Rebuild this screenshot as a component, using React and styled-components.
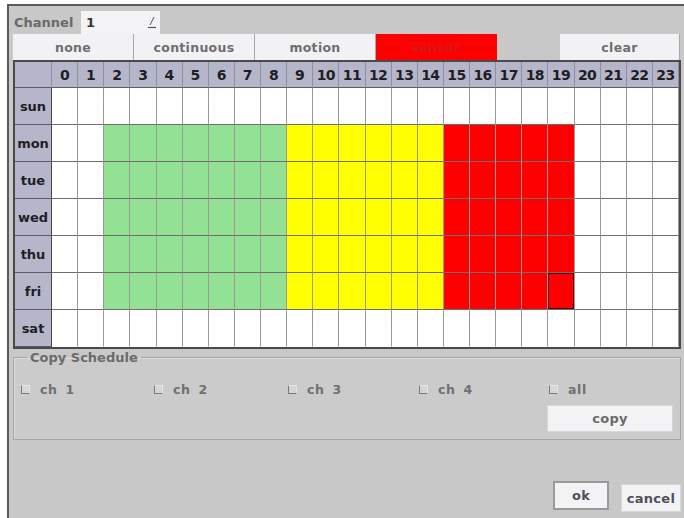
import React from 'react';
import styled, { createGlobalStyle } from 'styled-components';

const Global = createGlobalStyle`
    html, body {
        margin: 0;
        padding: 0;
        background: #ffffff;
    }
    body {
        font-family: 'DejaVu Sans', Verdana, sans-serif;
    }
`;

const Window = styled.div`
    margin: 4px 0 0 7px;
    width: 677px;
    height: 514px;
    box-sizing: border-box;
    border-left: 2px solid #5a5a5a;
    border-top: 2px solid #5a5a5a;
    background: #c8c8c8;
    padding: 4px 3px 0 4px;
    display: flex;
    flex-direction: column;
`;

const ChannelRow = styled.div`
    display: flex;
    align-items: center;
    height: 24px;
`;

const Label = styled.span`
    font-size: 13px;
    font-weight: bold;
    color: #6a6a6a;
    width: 67px;
    padding-left: 1px;
`;

const ChannelInput = styled.div`
    width: 79px;
    height: 23px;
    box-sizing: border-box;
    background: #f3f3f5;
    display: flex;
    align-items: center;
    justify-content: space-between;
    padding: 0 4px 0 5px;
    font-size: 13px;
    font-weight: bold;
    color: #333;
`;

const ModeRow = styled.div`
    display: flex;
    height: 26px;
`;

const ModeButton = styled.div`
    width: ${p => p.$w || 121}px;
    height: 26px;
    box-sizing: border-box;
    margin-left: ${p => p.$gap || 0}px;
    background: ${p => (p.$active ? '#ff0000' : '#f2f2f4')};
    border-right: 1px solid ${p => (p.$active ? '#ff0000' : '#a8a8a8')};
    display: flex;
    align-items: center;
    justify-content: center;
    font-size: 12.5px;
    font-weight: bold;
    letter-spacing: 0.3px;
    color: ${p => (p.$active ? '#d81818' : '#6e6e6e')};
`;

const Grid = styled.div`
    width: 668px;
    box-sizing: border-box;
    border: 2px solid #4a4a4a;
    display: grid;
    grid-template-columns: 37px repeat(24, 1fr);
    grid-template-rows: 26px repeat(7, 37px);
    background: #ffffff;
`;

const HeadCell = styled.div`
    background: ${p => (p.$light ? '#c3c3d3' : '#b6b6ca')};
    border-right: 1px solid #8e8e9e;
    border-bottom: 1px solid #5a5a66;
    display: flex;
    align-items: center;
    justify-content: center;
    font-size: 14px;
    font-weight: bold;
    letter-spacing: -0.6px;
    color: #1e1e24;
`;

const DayCell = styled(HeadCell)`
    font-size: 13px;
    letter-spacing: 0;
    border-right: 1px solid #4a4a4a;
`;

const Cell = styled.div`
    background: ${p => p.$color};
    border-right: 1px solid #9a9a9a;
    border-bottom: 1px solid ${p => (p.$last ? 'transparent' : '#6e6e6e')};
    box-shadow: ${p => (p.$selected ? 'inset 0 0 0 1px #5a0000' : 'none')};
`;

const CopyBox = styled.fieldset`
    margin: 1px 0 0;
    width: 668px;
    height: 90px;
    box-sizing: border-box;
    padding: 17px 0 0 7px;
    border: 1px solid #a6a6a6;
    box-shadow: inset 1px 1px 0 #dcdcdc;
    background: #cbcbcb;
`;

const Legend = styled.legend`
    font-size: 13px;
    font-weight: bold;
    color: #6a6a6a;
    padding: 0 3px;
    margin-left: 6px;
`;

const CheckRow = styled.div`
    display: flex;
`;

const CheckItem = styled.label`
    width: ${p => p.$w}px;
    display: flex;
    align-items: center;
    gap: 10px;
    font-size: 12.5px;
    font-weight: bold;
    letter-spacing: 0.6px;
    word-spacing: 3px;
    color: #707070;
`;

const Box = styled.span`
    width: 7px;
    height: 7px;
    background: #d6d6d6;
    border-left: 1px solid #7a7a7a;
    border-bottom: 1px solid #7a7a7a;
    border-top: 1px solid #e6e6e6;
    border-right: 1px solid #e6e6e6;
`;

const FieldBottom = styled.div`
    display: flex;
    justify-content: flex-end;
    padding: 8px 7px 0 0;
`;

const PlainButton = styled.div`
    width: ${p => p.$w}px;
    height: ${p => p.$h}px;
    margin-top: ${p => p.$top || 0}px;
    box-sizing: border-box;
    background: #f3f3f5;
    border: ${p => (p.$focus ? '2px solid #9a9a9a' : '1px solid #d8d8d8')};
    display: flex;
    align-items: center;
    justify-content: center;
    font-size: 13px;
    font-weight: bold;
    color: ${p => (p.$dark ? '#505058' : '#6a6a6a')};
    letter-spacing: 0.3px;
`;

const Footer = styled.div`
    display: flex;
    justify-content: flex-end;
    align-items: flex-start;
    gap: 12px;
    margin-top: 41px;
`;

const hours = Array.from({ length: 24 }, (_, i) => i);
const days = ['sun', 'mon', 'tue', 'wed', 'thu', 'fri', 'sat'];

const colorFor = (d, h) => {
    if (d < 1 || d > 5) return '#ffffff';
    if (h >= 2 && h <= 8) return '#93e293';
    if (h >= 9 && h <= 14) return '#ffff00';
    if (h >= 15 && h <= 19) return '#ff0000';
    return '#ffffff';
};

const DropIcon = () => (
    <svg width="8" height="14" viewBox="0 0 8 14">
        <line x1="2" y1="10" x2="6" y2="2" stroke="#555" strokeWidth="1" />
        <line x1="0" y1="12.5" x2="8" y2="12.5" stroke="#555" strokeWidth="1.2" />
    </svg>
);

export default () => {
    const checks = [
        { label: 'ch 1', w: 133 },
        { label: 'ch 2', w: 134 },
        { label: 'ch 3', w: 131 },
        { label: 'ch 4', w: 130 },
        { label: 'all', w: 100 },
    ];

    return (
        <>
            <Global />
            <Window>
                <ChannelRow>
                    <Label>Channel</Label>
                    <ChannelInput>
                        <span>1</span>
                        <DropIcon />
                    </ChannelInput>
                </ChannelRow>
                <ModeRow>
                    <ModeButton>none</ModeButton>
                    <ModeButton>continuous</ModeButton>
                    <ModeButton>motion</ModeButton>
                    <ModeButton $active>sensor</ModeButton>
                    <ModeButton $gap={63} $w={120}>clear</ModeButton>
                </ModeRow>
                <Grid>
                    <HeadCell />
                    {hours.map(h => (
                        <HeadCell key={h}>{h}</HeadCell>
                    ))}
                    {days.map((day, d) => (
                        <React.Fragment key={day}>
                            <DayCell>{day}</DayCell>
                            {hours.map(h => (
                                <Cell
                                    key={h}
                                    $color={colorFor(d, h)}
                                    $last={d === 6}
                                    $selected={d === 5 && h === 19}
                                />
                            ))}
                        </React.Fragment>
                    ))}
                </Grid>
                <CopyBox>
                    <Legend>Copy Schedule</Legend>
                    <CheckRow>
                        {checks.map(c => (
                            <CheckItem key={c.label} $w={c.w}>
                                <Box />
                                {c.label}
                            </CheckItem>
                        ))}
                    </CheckRow>
                    <FieldBottom>
                        <PlainButton $w={126} $h={27}>copy</PlainButton>
                    </FieldBottom>
                </CopyBox>
                <Footer>
                    <PlainButton $w={56} $h={29} $focus $dark>ok</PlainButton>
                    <PlainButton $w={60} $h={28} $top={3} $dark>cancel</PlainButton>
                </Footer>
            </Window>
        </>
    );
};
